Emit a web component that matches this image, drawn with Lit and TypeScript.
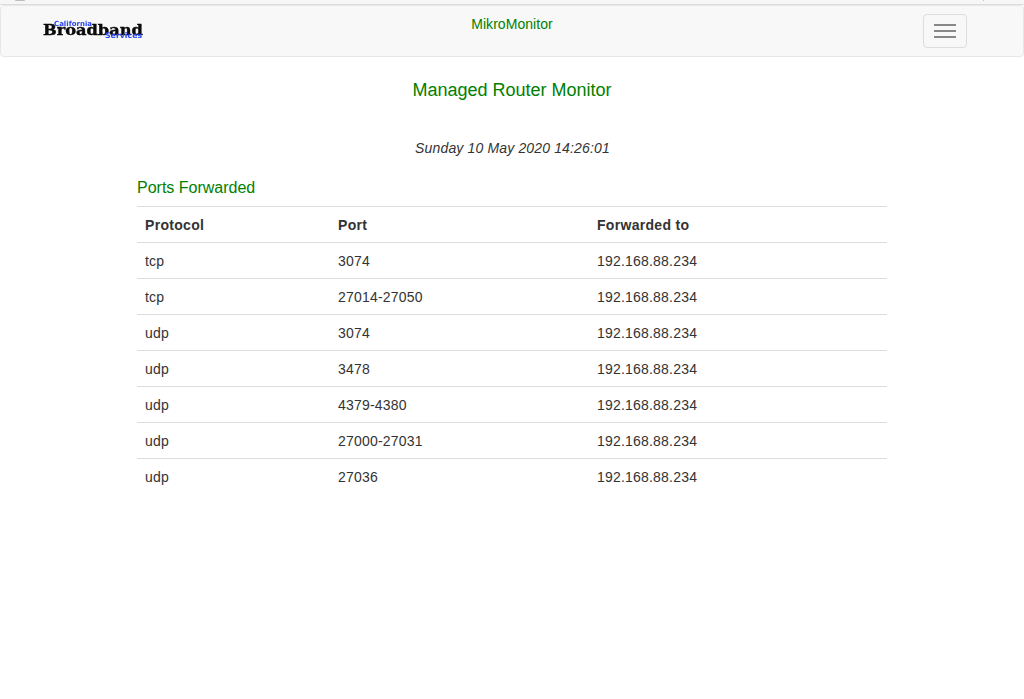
import { LitElement, html, css } from "lit";
import { customElement } from "lit/decorators.js";

const rows = [
  ["tcp", "3074"],
  ["tcp", "27014-27050"],
  ["udp", "3074"],
  ["udp", "3478"],
  ["udp", "4379-4380"],
  ["udp", "27000-27031"],
  ["udp", "27036"],
];

@customElement("app-root")
export class AppRoot extends LitElement {
  static styles = css`
    :host {
      display: block;
      min-height: 699px;
      background: #fff;
      font-family: "Liberation Sans", Arial, sans-serif;
      font-size: 14px;
      line-height: 20px;
      color: #333;
    }
    .chrome {
      position: relative;
      height: 4px;
      background: #f6f6f6;
      border-bottom: 1px solid #dcdcdc;
      box-sizing: content-box;
    }
    .chrome .tab {
      position: absolute;
      left: 15px;
      top: 0;
      width: 10px;
      height: 1px;
      border-radius: 0 0 5px 5px;
      background: #bdbdbd;
    }
    .chrome .dot {
      position: absolute;
      left: 983px;
      top: 0;
      width: 1px;
      height: 1px;
      background: #c4c4c4;
    }
    .navbar {
      box-sizing: border-box;
      height: 52px;
      background: #f8f8f8;
      border: 1px solid #e7e7e7;
      border-radius: 4px;
      display: grid;
      grid-template-columns: 1fr auto 1fr;
      padding: 0 41px;
    }
    .logo {
      position: relative;
      width: 102px;
      height: 20px;
      margin-top: 14px;
      font-family: "DejaVu Sans", sans-serif;
      font-weight: 700;
      filter: blur(0.3px);
    }
    .logo .main {
      position: absolute;
      left: 1px;
      top: 3px;
      font-family: "DejaVu Serif", serif;
      font-size: 15px;
      font-weight: 700;
      line-height: 14px;
      color: #0a0a0a;
      -webkit-text-stroke: 0.4px #0a0a0a;
      transform: scaleX(1.08);
      transform-origin: left center;
      white-space: nowrap;
    }
    .logo .top {
      position: absolute;
      left: 12px;
      top: 1px;
      font-size: 7px;
      line-height: 7px;
      color: #2a46f0;
      white-space: nowrap;
    }
    .logo .bottom {
      position: absolute;
      left: 63px;
      top: 12px;
      font-size: 7.8px;
      line-height: 7px;
      color: #2a46f0;
      white-space: nowrap;
    }
    .brand {
      justify-self: center;
      padding-top: 8px;
      color: #008000;
      letter-spacing: 0.05px;
    }
    .toggle {
      justify-self: end;
      box-sizing: border-box;
      width: 44px;
      height: 34px;
      margin: 8px 15px 0 0;
      padding: 0;
      background: transparent;
      border: 1px solid #ddd;
      border-radius: 4px;
      display: flex;
      flex-direction: column;
      align-items: center;
      justify-content: center;
      gap: 4px;
    }
    .toggle span {
      display: block;
      width: 22px;
      height: 2px;
      background: #888;
    }
    .content {
      width: 750px;
      margin: 0 auto;
    }
    h1 {
      margin: 22px 0 0;
      text-align: center;
      font-size: 18px;
      font-weight: 400;
      line-height: 22px;
      color: #008000;
    }
    .date {
      margin: 37px 0 0;
      padding-left: 1px;
      text-align: center;
      font-style: italic;
      letter-spacing: 0.15px;
    }
    h2 {
      margin: 20px 0 0;
      font-size: 16px;
      font-weight: 400;
      line-height: 20px;
      color: #008000;
    }
    table {
      width: 750px;
      margin-top: 8px;
      border-collapse: collapse;
      table-layout: fixed;
    }
    th, td {
      padding: 8px 8px 7px;
      box-sizing: border-box;
      text-align: left;
      border-top: 1px solid #ddd;
    }
    th { font-weight: 700; letter-spacing: 0.3px; }
    td { letter-spacing: 0.2px; }
    .c1 { width: 193px; }
    .c2 { width: 259px; }
  `;

  render() {
    return html`
      <div class="chrome"><span class="tab"></span><span class="dot"></span></div>
      <nav class="navbar">
        <div class="logo">
          <span class="main">Broadband</span>
          <span class="top">California</span>
          <span class="bottom">Services</span>
        </div>
        <div class="brand">MikroMonitor</div>
        <button class="toggle" aria-label="Toggle navigation"><span></span><span></span><span></span></button>
      </nav>
      <main class="content">
        <h1>Managed Router Monitor</h1>
        <p class="date">Sunday 10 May 2020 14:26:01</p>
        <h2>Ports Forwarded</h2>
        <table>
          <thead>
            <tr><th class="c1">Protocol</th><th class="c2">Port</th><th>Forwarded to</th></tr>
          </thead>
          <tbody>
            ${rows.map(
              ([p, n]) => html`<tr><td>${p}</td><td>${n}</td><td>192.168.88.234</td></tr>`
            )}
          </tbody>
        </table>
      </main>
    `;
  }
}
